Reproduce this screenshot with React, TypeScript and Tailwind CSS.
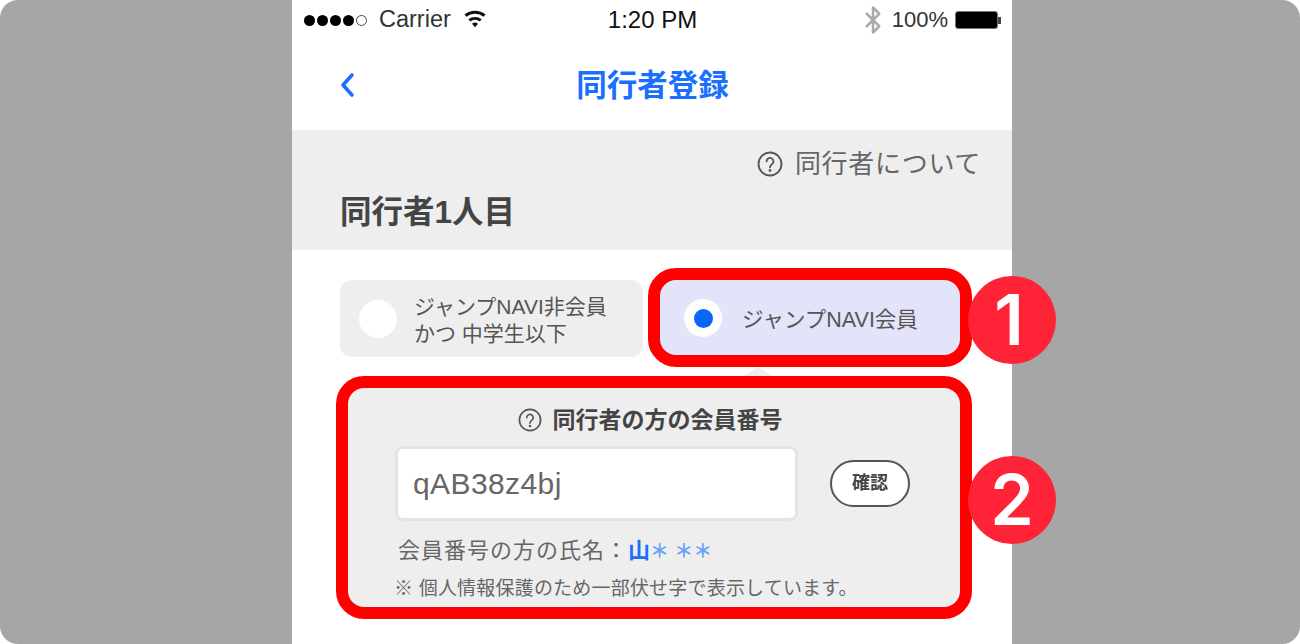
import React from 'react';
import { Bluetooth } from 'lucide-react';

const FONT = '"Liberation Sans", "Noto Sans CJK JP", sans-serif';

function HelpIcon({ size }: { size: number }) {
  return (
    <svg width={size} height={size} viewBox="0 0 24 24" fill="none" stroke="#555" strokeWidth="1.7" strokeLinecap="round">
      <circle cx="12" cy="12" r="10.6" />
      <path d="M8.8 9.6a3.2 3.2 0 1 1 5.2 2.5c-1.2 1-2 1.5-2 3" />
      <circle cx="12" cy="18" r="0.5" fill="#555" />
    </svg>
  );
}

function WifiIcon() {
  return (
    <svg width="28" height="21" viewBox="0 0 24 18" fill="#111">
      <path d="M12 16.6 9.4 13.4a4.2 4.2 0 0 1 5.2 0z" />
      <path d="M7.9 11.6a6.6 6.6 0 0 1 8.2 0l1.6-2a9.2 9.2 0 0 0-11.4 0z" />
      <path d="M4.6 7.5a11.9 11.9 0 0 1 14.8 0l1.6-2a14.5 14.5 0 0 0-18 0z" />
    </svg>
  );
}

function StatusBar() {
  return (
    <div className="h-[40px] pl-[12px] pr-[11px] flex items-center justify-between text-[#333]">
      <div className="w-[300px] flex items-center">
        <div className="flex items-center gap-[2px]">
          <span className="w-[11px] h-[11px] rounded-full bg-black" />
          <span className="w-[11px] h-[11px] rounded-full bg-black" />
          <span className="w-[11px] h-[11px] rounded-full bg-black" />
          <span className="w-[11px] h-[11px] rounded-full bg-black" />
          <span className="w-[11px] h-[11px] rounded-full border border-[#444]" />
        </div>
        <span className="ml-[12px] text-[23.5px] leading-none">Carrier</span>
        <span className="ml-[10px] -mt-[4px]">
          <WifiIcon />
        </span>
      </div>
      <span className="text-[24px] leading-none text-[#111]">1:20 PM</span>
      <div className="w-[300px] flex items-center justify-end">
        <Bluetooth size={30} strokeWidth={2} className="text-[#aaa]" />
        <span className="ml-[4px] text-[22px] leading-none">100%</span>
        <div className="ml-[7px] flex items-center">
          <span className="w-[43px] h-[18px] rounded-[3px] bg-black border border-[#777]" />
          <span className="w-[3px] h-[7px] bg-[#444]" />
        </div>
      </div>
    </div>
  );
}

export default function App() {
  return (
    <div className="w-[1300px] h-[644px] bg-white overflow-hidden" style={{ fontFamily: FONT }}>
      <div className="w-full h-full rounded-[18px] bg-[#a6a6a6] flex justify-center pl-[4px] overflow-hidden">
        <div className="w-[720px] h-full bg-white flex flex-col">
          <StatusBar />

          <div className="h-[90px] pl-[48px] pr-[47px] flex items-center justify-between">
            <svg width="16" height="26" viewBox="0 0 16 26" fill="none" stroke="#1a6fff" strokeWidth="3.6" strokeLinecap="round" strokeLinejoin="round">
              <path d="M12 3 3 13l9 10" />
            </svg>
            <span className="text-[30.5px] font-bold text-[#1a6fff] leading-none">同行者登録</span>
            <span className="w-[16px]" />
          </div>

          <div className="h-[120px] bg-[#eeeeee] pl-[48px] pr-[31px] pt-[19px] flex flex-col">
            <div className="flex items-center justify-end gap-[12px] text-[26px] leading-[30px] tracking-[0.7px] text-[#666]">
              <HelpIcon size={26} />
              <span>同行者について</span>
            </div>
            <div className="mt-[15px] text-[31.5px] leading-[36px] font-bold text-[#444]">同行者1人目</div>
          </div>

          <div className="mt-[18px] pl-[48px] flex items-start">
            <div className="mt-[12px] w-[303px] h-[77px] rounded-[12px] bg-[#eeeeee] pl-[19px] flex items-center">
              <span className="w-[38px] h-[38px] rounded-full bg-white" />
              <div className="ml-[17px] pt-[2px] text-[21px] leading-[27px] text-[#555]">
                <div>ジャンプNAVI非会員</div>
                <div>かつ 中学生以下</div>
              </div>
            </div>

            <div className="relative ml-[5px] w-[324px] h-[99px] rounded-[28px] border-[12px] border-[#ff0000] bg-[#e3e3fa] flex items-center pl-[24px]">
              <span className="mt-[1px] w-[38px] h-[38px] rounded-full bg-white flex items-center justify-center">
                <span className="w-[19px] h-[19px] rounded-full bg-[#0a66f5]" />
              </span>
              <span className="ml-[20px] mt-[6px] text-[21.5px] text-[#555]">ジャンプNAVI会員</span>
              <div className="absolute left-[308px] top-[-4px] w-[88px] h-[88px] pr-[6px] rounded-full bg-[#ff2337] flex items-center justify-center text-white text-[70px] font-semibold leading-none" style={{ fontFamily: 'Inter, sans-serif' }}>
                1
              </div>
            </div>
          </div>

          <div className="relative mt-[9px] ml-[44px] w-[636px] h-[243px] rounded-[28px] border-[12px] border-[#ff0000] bg-[#eeeeee] flex flex-col pl-[47px]">
            <div className="mt-[17px] pr-[55px] flex items-center justify-center gap-[11px] text-[23px] leading-[30px] font-bold text-[#444]">
              <HelpIcon size={24} />
              <span>同行者の方の会員番号</span>
            </div>
            <div className="mt-[11px] flex items-center">
              <div className="w-[403px] h-[75px] rounded-[8px] border-[3px] border-[#e4e4e4] bg-white pl-[15px] flex items-center text-[30px] tracking-[0.4px] text-[#666]">
                qAB38z4bj
              </div>
              <div className="ml-[32px] w-[80px] h-[47px] rounded-full border-2 border-[#555] bg-white flex items-center justify-center text-[18px] font-bold text-[#444]">
                確認
              </div>
            </div>
            <div className="mt-[15px] ml-[3px] text-[22px] leading-[30px] tracking-[1px] text-[#666] flex items-baseline">
              <span>会員番号の方の氏名：</span>
              <span className="text-[#1a6fff] font-bold tracking-normal">山</span>
              <span className="text-[19px] font-bold tracking-normal text-[#6aa2fa]">＊ ＊＊</span>
            </div>
            <div className="mt-[9px] -ml-[1px] text-[19px] leading-[26px] tracking-[0.2px] text-[#666]">
              ※ 個人情報保護のため一部伏せ字で表示しています。
            </div>
            <div className="absolute left-[396px] top-[-21px] w-0 h-0 border-x-[14px] border-x-transparent border-b-[9px] border-b-[#eeeeee]" />
            <div className="absolute left-[620px] top-[68px] w-[88px] h-[88px] rounded-full bg-[#ff2337] flex items-center justify-center text-white text-[70px] font-semibold leading-none" style={{ fontFamily: 'Inter, sans-serif' }}>
              2
            </div>
          </div>
        </div>
      </div>
    </div>
  );
}
